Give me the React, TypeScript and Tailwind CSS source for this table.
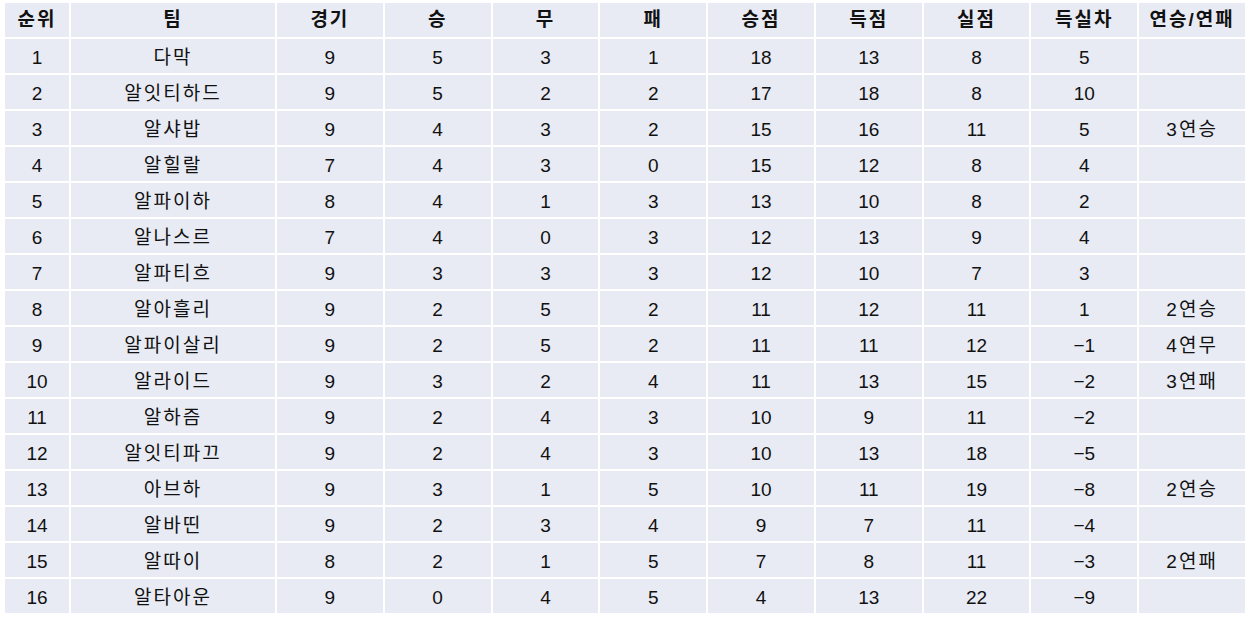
const headers = ["순위", "팀", "경기", "승", "무", "패", "승점", "득점", "실점", "득실차", "연승/연패"]

const rows: (string | number)[][] = [
  [1, "다막", 9, 5, 3, 1, 18, 13, 8, "5", ""],
  [2, "알잇티하드", 9, 5, 2, 2, 17, 18, 8, "10", ""],
  [3, "알샤밥", 9, 4, 3, 2, 15, 16, 11, "5", "3연승"],
  [4, "알힐랄", 7, 4, 3, 0, 15, 12, 8, "4", ""],
  [5, "알파이하", 8, 4, 1, 3, 13, 10, 8, "2", ""],
  [6, "알나스르", 7, 4, 0, 3, 12, 13, 9, "4", ""],
  [7, "알파티흐", 9, 3, 3, 3, 12, 10, 7, "3", ""],
  [8, "알아흘리", 9, 2, 5, 2, 11, 12, 11, "1", "2연승"],
  [9, "알파이살리", 9, 2, 5, 2, 11, 11, 12, "−1", "4연무"],
  [10, "알라이드", 9, 3, 2, 4, 11, 13, 15, "−2", "3연패"],
  [11, "알하즘", 9, 2, 4, 3, 10, 9, 11, "−2", ""],
  [12, "알잇티파끄", 9, 2, 4, 3, 10, 13, 18, "−5", ""],
  [13, "아브하", 9, 3, 1, 5, 10, 11, 19, "−8", "2연승"],
  [14, "알바띤", 9, 2, 3, 4, 9, 7, 11, "−4", ""],
  [15, "알따이", 8, 2, 1, 5, 7, 8, 11, "−3", "2연패"],
  [16, "알타아운", 9, 0, 4, 5, 4, 13, 22, "−9", ""],
]

export default function App() {
  return (
    <div
      className="w-[1250px] h-[620px] bg-white pt-[3px] px-[5px] text-[#111] text-[19px]"
      style={{ fontFamily: '"Liberation Sans", "Noto Sans CJK KR", sans-serif' }}
    >
      <div className="grid grid-cols-[64px_204px_repeat(9,1fr)] gap-[2px]">
        {/* Header */}
        {headers.map((h) => (
          <div
            key={h}
            className="h-[34px] bg-[#e8ebf4] flex items-center justify-center font-bold tracking-[2px]"
          >
            {h}
          </div>
        ))}

        {/* Rows */}
        {rows.map((row) =>
          row.map((cell, i) => (
            <div
              key={`${row[0]}-${i}`}
              className={`h-[34px] pt-[4px] bg-[#e8ebf4] flex items-center justify-center ${
                i === 1 || i === 10 ? "tracking-[2px]" : ""
              }`}
            >
              {cell}
            </div>
          ))
        )}
      </div>
    </div>
  )
}
